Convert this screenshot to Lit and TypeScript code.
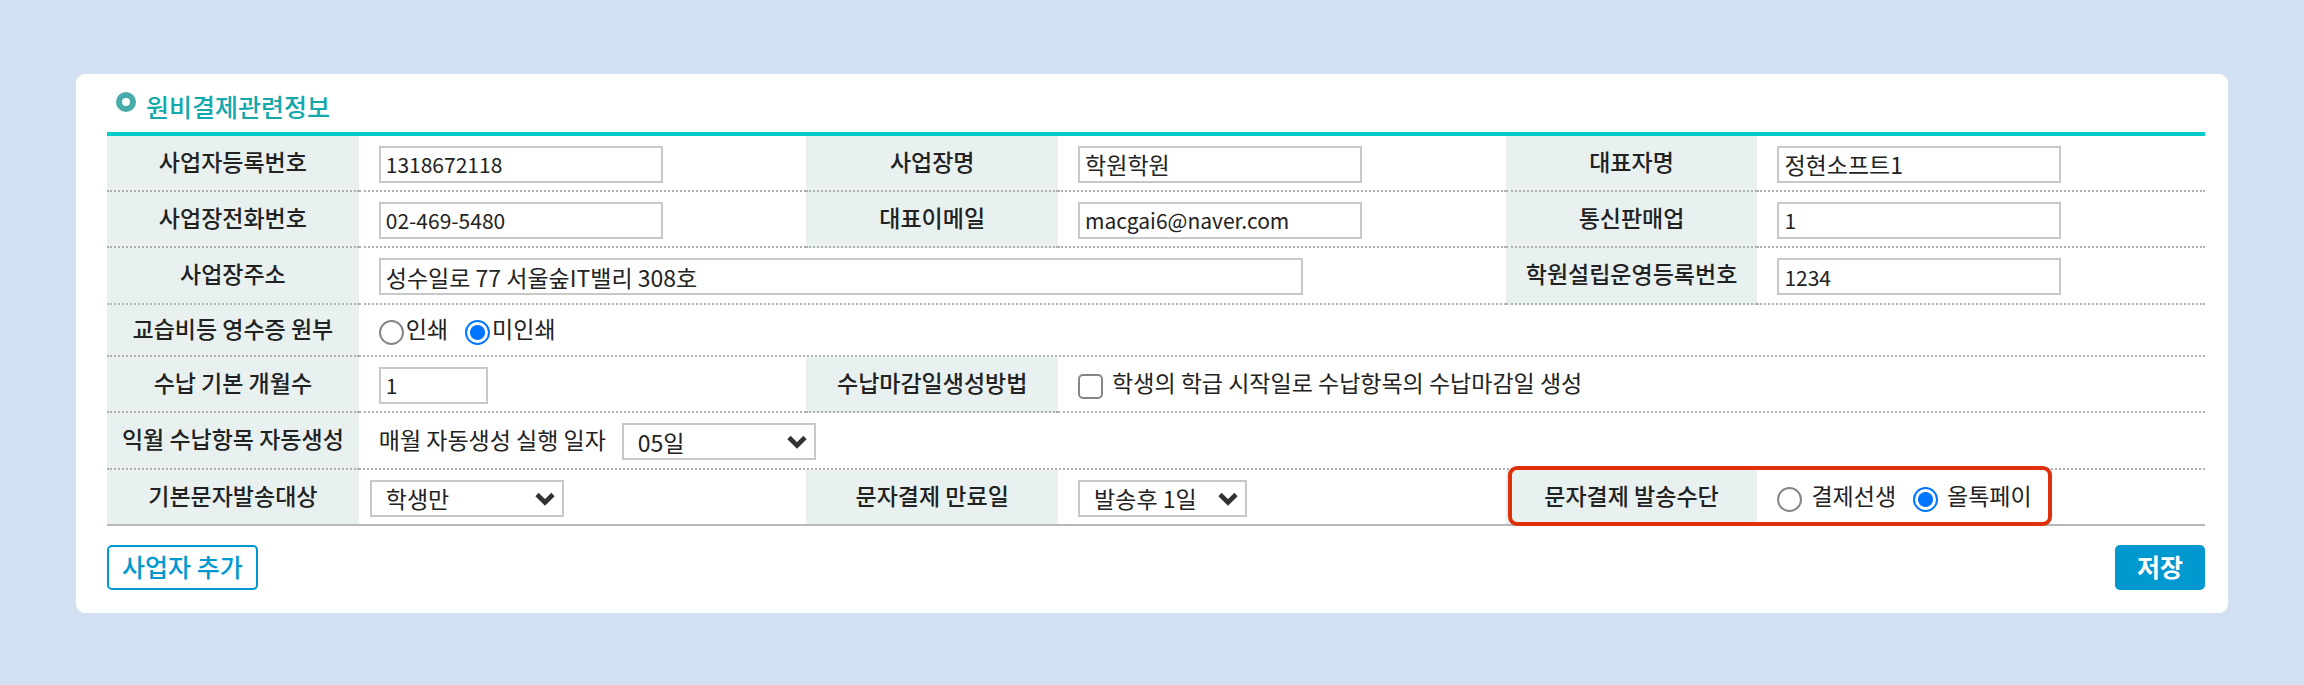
import { LitElement, html, css } from "lit";
import { customElement } from "lit/decorators.js";

const arrow = html`<svg class="arrow" viewBox="0 0 20 14" aria-hidden="true">
  <path d="M2 2.5 L10 10.5 L18 2.5" fill="none" stroke="#333" stroke-width="4.6" />
</svg>`;

@customElement("app-root")
export class AppRoot extends LitElement {
  static styles = css`
    :host {
      display: block;
      box-sizing: border-box;
      min-height: 100vh;
      padding: 74px 76px 72px;
      background: #d2e1f2;
      color: #222;
      font-family: "Noto Sans CJK KR", sans-serif;
      font-size: 23px;
      line-height: 32px;
    }
    *,
    *::before {
      box-sizing: border-box;
    }
    .card {
      background: #fff;
      border-radius: 9px;
      padding: 16px 23px 23px 31px;
    }
    .title {
      display: flex;
      align-items: center;
      gap: 10px;
      margin: 0;
      padding: 0 0 10px 9px;
      height: 42px;
      font-size: 25px;
      line-height: 36px;
      font-weight: 500;
      color: #12a8ac;
    }
    .ring {
      width: 20px;
      height: 20px;
      margin-bottom: 8px;
    }
    .grid {
      width: 100%;
      table-layout: fixed;
      border-collapse: separate;
      border-spacing: 0;
      border-top: 4px solid #00cccc;
      border-bottom: 2px solid #b8b8b8;
    }
    .name {
      width: 12%;
    }
    tr {
      height: 56px;
    }
    .tall {
      height: 57px;
    }
    .short {
      height: 52px;
    }
    th,
    td {
      padding: 0;
      border-bottom: 2px dotted #b0b0b0;
      vertical-align: middle;
      white-space: nowrap;
    }
    th {
      padding-bottom: 5px;
      background: #e8f1f0;
      font-weight: 500;
      text-align: center;
    }
    td {
      padding-left: 20px;
    }
    .last {
      height: 54px;
    }
    .last > * {
      border-bottom: 0;
    }
    .near {
      padding-left: 11px;
    }
    .line {
      display: flex;
      align-items: center;
    }
    .spaced {
      gap: 16px;
    }
    .lead {
      padding-bottom: 4px;
    }
    .text {
      display: block;
      width: 284px;
      height: 37px;
      margin: 2px 0 0;
      padding: 0 5px;
      border: 2px solid #c8c8c8;
      border-radius: 0;
      background: #fff;
      color: #222;
      font: inherit;
      outline: 0;
    }
    .latin {
      font-size: 21px;
    }
    .wide {
      width: 924px;
    }
    .tiny {
      width: 109px;
    }
    .pick {
      position: relative;
      display: block;
      width: 194px;
      margin-top: 2px;
    }
    .pick.slim {
      width: 169px;
    }
    select {
      appearance: none;
      display: block;
      width: 100%;
      height: 37px;
      padding: 0 14px;
      border: 2px solid #c8c8c8;
      border-radius: 0;
      background: #fff;
      color: #222;
      font: inherit;
    }
    .arrow {
      position: absolute;
      right: 9px;
      top: 12px;
      width: 20px;
      height: 14px;
      pointer-events: none;
    }
    .choice {
      display: flex;
      align-items: center;
      gap: 2px;
      margin-right: 17px;
    }
    .choice span {
      padding-bottom: 4px;
    }
    .roomy .choice {
      gap: 9px;
    }
    .choice input {
      appearance: none;
      flex: none;
      width: 25px;
      height: 25px;
      margin: 5px 0 0;
      border: 2px solid #858585;
      border-radius: 50%;
      background: #fff;
    }
    .choice input[type="checkbox"] {
      border-radius: 5px;
    }
    .choice input[type="radio"]:checked {
      border-color: #0075ff;
      background: radial-gradient(circle, #0075ff 7px, #fff 8px);
    }
    .marked {
      position: relative;
    }
    .frame {
      position: absolute;
      z-index: 1;
      left: 2px;
      top: -4px;
      bottom: -2px;
      width: 544px;
      border: 4px solid #de300a;
      border-radius: 9px;
      pointer-events: none;
    }
    .actions {
      display: flex;
      justify-content: space-between;
      margin-top: 19px;
    }
    button {
      height: 45px;
      padding: 0 13px 4px;
      border: 2px solid #0099cf;
      border-radius: 5px;
      background: #fff;
      color: #0099cf;
      font: inherit;
      font-size: 25px;
      font-weight: 500;
      line-height: 36px;
    }
    .save {
      padding: 0 20px 4px;
      background: #0099cf;
      color: #fff;
      font-weight: 700;
    }
  `;

  private field(id: string, label: string, value: string, size = "", span = 1) {
    return html`<th scope="row"><label for=${id}>${label}</label></th>
      <td colspan=${span}><input class="text ${size}" id=${id} type="text" .value=${value} /></td>`;
  }

  private select(id: string, value: string, size = "") {
    return html`<span class="pick ${size}"
      ><select id=${id}><option selected>${value}</option></select>${arrow}</span
    >`;
  }

  private radio(name: string, label: string, checked = false) {
    return html`<label class="choice"
      ><input type="radio" name=${name} .checked=${checked} /><span>${label}</span></label
    >`;
  }

  render() {
    return html`<main class="card">
      <h2 class="title">
        <svg class="ring" viewBox="0 0 20 20" aria-hidden="true">
          <circle cx="10" cy="10" r="7" fill="#fff" stroke="#48abab" stroke-width="6" />
        </svg>
        원비결제관련정보
      </h2>
      <table class="grid">
        <colgroup>
          <col class="name" /><col /><col class="name" /><col /><col class="name" /><col />
        </colgroup>
        <tbody>
          <tr>
            ${this.field("bizno", "사업자등록번호", "1318672118", "latin")}
            ${this.field("bizname", "사업장명", "학원학원")}
            ${this.field("owner", "대표자명", "정현소프트1")}
          </tr>
          <tr>
            ${this.field("phone", "사업장전화번호", "02-469-5480", "latin")}
            ${this.field("email", "대표이메일", "macgai6@naver.com", "latin")}
            ${this.field("mailorder", "통신판매업", "1", "latin")}
          </tr>
          <tr class="tall">
            ${this.field("address", "사업장주소", "성수일로 77 서울숲IT밸리 308호", "wide", 3)}
            ${this.field("license", "학원설립운영등록번호", "1234", "latin")}
          </tr>
          <tr class="short">
            <th scope="row">교습비등 영수증 원부</th>
            <td colspan="5">
              <div class="line">
                ${this.radio("receipt", "인쇄")}${this.radio("receipt", "미인쇄", true)}
              </div>
            </td>
          </tr>
          <tr>
            ${this.field("months", "수납 기본 개월수", "1", "latin tiny")}
            <th scope="row">수납마감일생성방법</th>
            <td colspan="3" class="roomy">
              <label class="choice"
                ><input type="checkbox" /><span>학생의 학급 시작일로 수납항목의 수납마감일 생성</span></label
              >
            </td>
          </tr>
          <tr class="tall">
            <th scope="row">익월 수납항목 자동생성</th>
            <td colspan="5">
              <div class="line spaced">
                <label class="lead" for="day">매월 자동생성 실행 일자</label>${this.select("day", "05일")}
              </div>
            </td>
          </tr>
          <tr class="last">
            <th scope="row"><label for="target">기본문자발송대상</label></th>
            <td class="near">${this.select("target", "학생만")}</td>
            <th scope="row"><label for="expiry">문자결제 만료일</label></th>
            <td>${this.select("expiry", "발송후 1일", "slim")}</td>
            <th scope="row" class="marked">문자결제 발송수단<span class="frame"></span></th>
            <td class="roomy">
              <div class="line">
                ${this.radio("means", "결제선생")}${this.radio("means", "올톡페이", true)}
              </div>
            </td>
          </tr>
        </tbody>
      </table>
      <div class="actions">
        <button type="button">사업자 추가</button>
        <button type="button" class="save">저장</button>
      </div>
    </main>`;
  }
}
